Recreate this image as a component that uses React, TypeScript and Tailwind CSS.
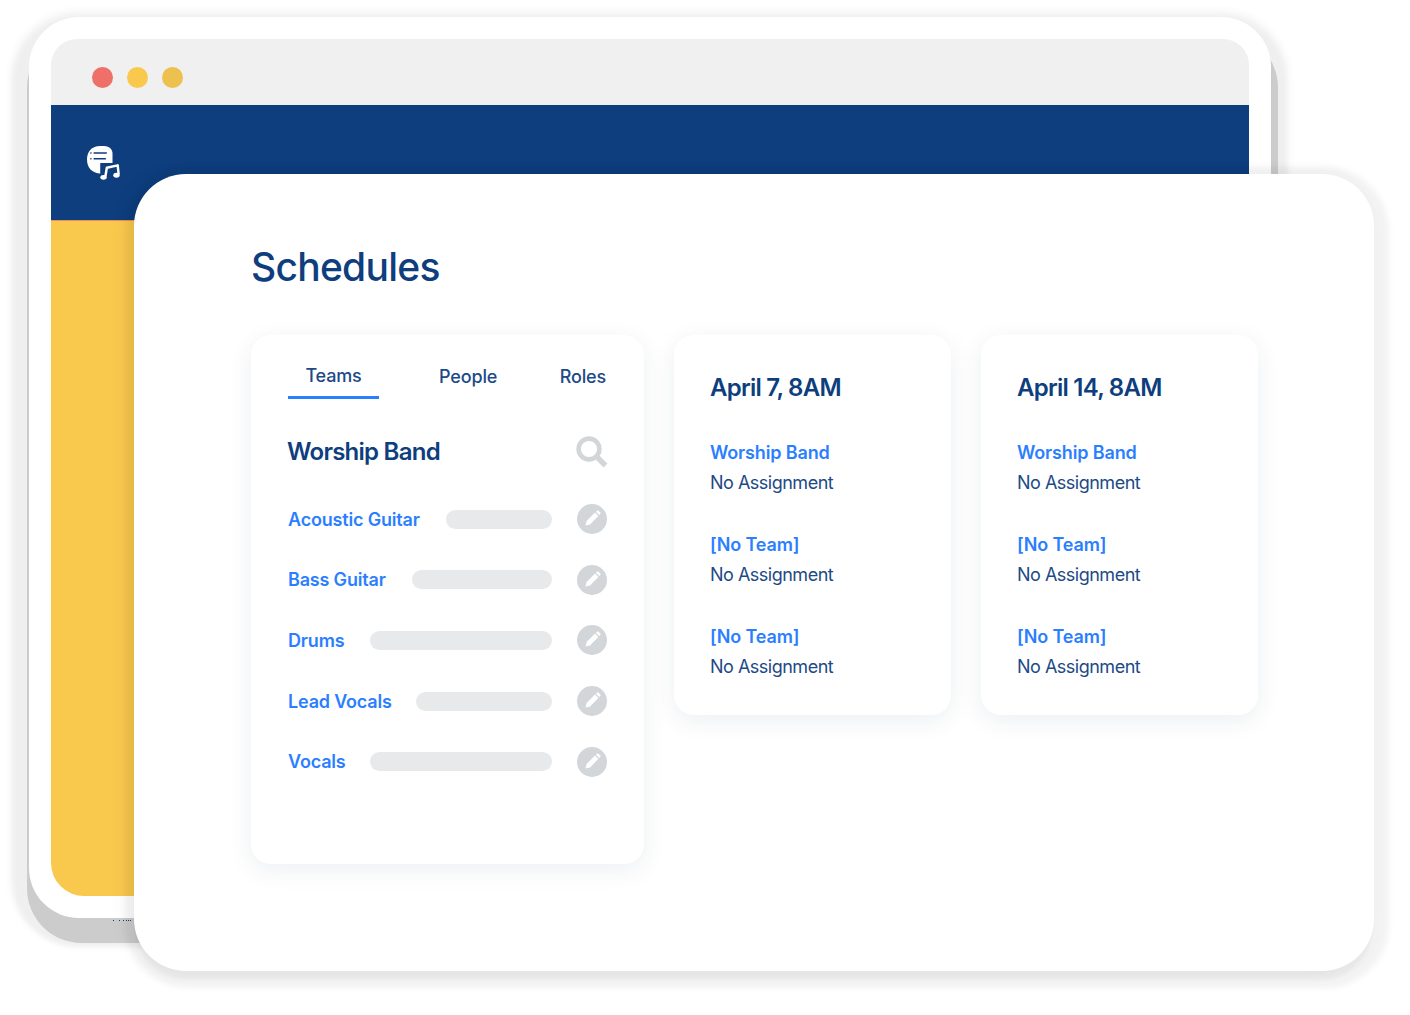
const FONT = "font-['Inter','Liberation_Sans',sans-serif]";

function Logo() {
  return (
    <svg width="34" height="36" viewBox="0 0 36 38" fill="none" className="block">
      <path d="M14 1 C5 1 0 7 0 15 C0 24 5 29 13 30 L19 30 C25 30 27 26 27 19 L27 9 C27 4 23 1 18 1 Z" fill="#fff" />
      <path d="M7 8.5 H21 M7 14.5 H20" stroke="#0e3e7e" strokeWidth="1.6" />
      <path d="M3.5 8.5 H4.8 M3.5 14.5 H4.8" stroke="#0e3e7e" strokeWidth="1.6" />
      <path d="M18 19 H36 V38 H14 V19 Z" fill="#0e3e7e" />
      <path d="M19.5 33 L21 24 L32.5 21.5 L33.5 31" stroke="#fff" strokeWidth="2.6" fill="none" strokeLinejoin="round" />
      <ellipse cx="17.5" cy="34.2" rx="3.4" ry="2.6" fill="#fff" />
      <ellipse cx="31.2" cy="32" rx="3.4" ry="2.6" fill="#fff" />
    </svg>
  );
}

function SearchIcon() {
  return (
    <svg width="32" height="32" viewBox="0 0 32 32" fill="none" className="block">
      <circle cx="13" cy="13" r="10.4" stroke="#d3d6d9" strokeWidth="4.6" />
      <path d="M21 21 L29.5 29.5" stroke="#d3d6d9" strokeWidth="5.4" />
    </svg>
  );
}

function PenIcon() {
  return (
    <svg width="30" height="30" viewBox="0 0 30 30" className="block shrink-0">
      <circle cx="15" cy="15" r="15" fill="#d3d6d9" />
      <path d="M8.5 21.5 L9.6 17 L18 8.6 L21.4 12 L13 20.4 Z" fill="#fff" />
      <path d="M18.9 7.7 L20 6.7 C20.5 6.3 21 6.3 21.5 6.7 L23.3 8.5 C23.7 9 23.7 9.5 23.3 10 L22.3 11.1 Z" fill="#fff" />
    </svg>
  );
}

function Row({ name, bar }: { name: string; bar: string }) {
  return (
    <div className="flex h-[30px] items-center">
      <span className="pt-[1px] text-[18px] leading-[30px] font-semibold tracking-[-0.18px] whitespace-nowrap text-[#2b7fff]">{name}</span>
      <div className={`ml-auto h-[19px] rounded-full bg-[#e8e9eb] ${bar}`} />
      <div className="ml-[25px]">
        <PenIcon />
      </div>
    </div>
  );
}

function Slot({ team }: { team: string }) {
  return (
    <div className="mt-[31px] first:mt-0">
      <div className="text-[18px] leading-[31px] font-semibold tracking-[-0.15px] text-[#2b7fff]">{team}</div>
      <div className="text-[18px] leading-[30px] tracking-[-0.5px] text-[#1c4a86]">No Assignment</div>
    </div>
  );
}

function DateCard({ title }: { title: string }) {
  return (
    <div className="h-[380px] w-[277px] rounded-[20px] bg-white pt-[37px] pl-[36px] shadow-[0_6px_24px_rgba(30,50,80,0.08)]">
      <h2 className="text-[24px] leading-[32px] font-semibold tracking-[-0.75px] whitespace-nowrap text-[#0e3e7e]">{title}</h2>
      <div className="mt-[33px]">
        <Slot team="Worship Band" />
        <Slot team="[No Team]" />
        <Slot team="[No Team]" />
      </div>
    </div>
  );
}

export default function App() {
  return (
    <div className={`relative h-[1015px] w-[1410px] overflow-hidden bg-white ${FONT}`}>
      {/* back browser window */}
      <div className="ml-[29px] pt-[17px]">
        <div className="h-[901px] w-[1242px] rounded-[50px] bg-white p-[22px] shadow-[2.5px_20.5px_0_4.5px_#cccccc,-0.5px_13px_4px_15px_#efefef,-0.5px_11px_6px_19px_#f8f8f8]">
          <div className="flex h-[857px] flex-col overflow-hidden rounded-t-[26px] rounded-b-[33px]">
            <div className="flex h-[66px] items-center gap-[14px] bg-[#f0f0f0] pt-[10px] pl-[41px]">
              <div className="h-[21px] w-[21px] rounded-full bg-[#ee7068]" />
              <div className="h-[21px] w-[21px] rounded-full bg-[#f9c94e]" />
              <div className="h-[21px] w-[21px] rounded-full bg-[#ecc14d]" />
            </div>
            <div className="h-[115px] bg-[#0e3e7e] pt-[40px] pl-[36px]">
              <Logo />
            </div>
            <div className="h-px bg-[#f08a5a]" />
            <div className="flex-1 bg-[#f9c94e]" />
          </div>
        </div>
      </div>

      {/* stray dots under the window */}
      <svg width="20" height="2" className="absolute top-[920px] left-[112px]">
        <path d="M1 0h1v1H1zM7 0h1v1H7zM11 0h1v1h-1zM14 0h1v1h-1zM16 0h1v1h-1zM18 0h1v1h-1z" fill="#0e3e7e" />
      </svg>

      {/* front card */}
      <div className="absolute top-[174px] left-[134px] h-[797px] w-[1240px] rounded-[52px] bg-white pl-[117px] shadow-[3px_5px_6px_12px_rgba(0,0,0,0.05),0_10px_4px_-2px_rgba(0,0,0,0.04),-10px_0_22px_rgba(0,0,0,0.03)]">
        <h1 className="pt-[67px] text-[39px] leading-[52px] font-medium tracking-[-0.75px] text-[#0e3e7e]">Schedules</h1>
        <div className="mt-[42px] flex items-start gap-[30px]">
          <div className="h-[529px] w-[393px] rounded-[20px] bg-white px-[37px] shadow-[0_6px_24px_rgba(30,50,80,0.08)]">
            <div className="relative flex h-[64px] text-[18px] font-medium text-[#1c4a86]">
              <div className="h-[64px] w-[91px] border-b-[3px] border-[#2b7fff] pt-[27px] text-center leading-[28px] tracking-[-0.15px]">Teams</div>
              <div className="ml-[60px] pt-[28px] leading-[28px] tracking-[-0.15px]">People</div>
              <div className="mr-[1px] ml-auto pt-[28px] leading-[28px] tracking-[-0.15px]">Roles</div>
            </div>
            <div className="mt-[34px] flex h-[38px] items-center justify-between">
              <h2 className="-ml-[1px] text-[24px] leading-[32px] font-semibold tracking-[-0.75px] text-[#0e3e7e]">Worship Band</h2>
              <div className="-mr-[1px]">
                <SearchIcon />
              </div>
            </div>
            <div className="mt-[33px] flex flex-col gap-[30.7px]">
              <Row name="Acoustic Guitar" bar="w-[106px]" />
              <Row name="Bass Guitar" bar="w-[140px]" />
              <Row name="Drums" bar="w-[182px]" />
              <Row name="Lead Vocals" bar="w-[136px]" />
              <Row name="Vocals" bar="w-[182px]" />
            </div>
          </div>
          <DateCard title="April 7, 8AM" />
          <DateCard title="April 14, 8AM" />
        </div>
      </div>
    </div>
  );
}
